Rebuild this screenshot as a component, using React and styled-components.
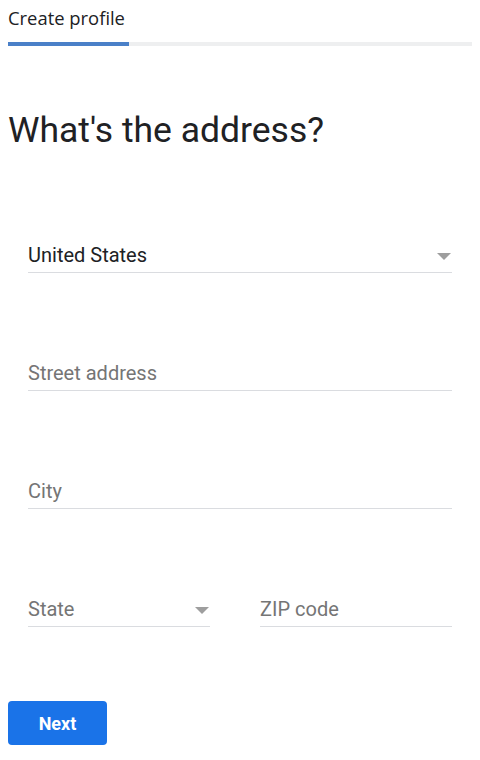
import React from "react";
import styled, { createGlobalStyle } from "styled-components";

const GlobalStyle = createGlobalStyle`
  body {
    margin: 0;
    background: #ffffff;
    font-family: Roboto, "Liberation Sans", Arial, sans-serif;
    color: #202124;
  }
`;

const Page = styled.div`
  width: 480px;
  min-height: 760px;
  display: flex;
  flex-direction: column;
`;

const Header = styled.div`
  padding: 7px 8px 0;
  font-family: "Open Sans", Roboto, sans-serif;
  font-size: 18.4px;
  line-height: 22px;
  color: #202124;
`;

const Track = styled.div`
  margin: 13px 8px 0;
  height: 4px;
  background: #eeeff0;
  display: flex;
`;

const Fill = styled.div`
  height: 100%;
  background: #4a80c8;
`;

const Title = styled.h1`
  margin: 64px 0 0 8px;
  font-size: 35.5px;
  line-height: 40px;
  font-weight: 400;
  color: #202124;
`;

const Form = styled.div`
  display: flex;
  flex-direction: column;
  gap: 88px;
  margin-top: 93px;
  padding: 0 28px;
`;

const Row = styled.div`
  display: flex;
  gap: 50px;
`;

const Field = styled.div`
  flex: ${(p) => (p.$width ? `0 0 ${p.$width}px` : "1")};
  display: flex;
  align-items: center;
  justify-content: space-between;
  padding-bottom: 5px;
  border-bottom: 1px solid #dadce0;
  font-size: 20px;
  line-height: 24px;
  color: ${(p) => (p.$filled ? "#202124" : "#757575")};
`;

const Caret = styled.span`
  width: 0;
  height: 0;
  margin-right: 1px;
  margin-top: 2px;
  border-left: 7px solid transparent;
  border-right: 7px solid transparent;
  border-top: 7px solid #9e9e9e;
`;

const Button = styled.button`
  margin: 74px 0 0 8px;
  width: 99px;
  height: 44px;
  border: none;
  border-radius: 4px;
  background: #1a73e8;
  color: #ffffff;
  font-family: Roboto, "Liberation Sans", Arial, sans-serif;
  font-size: 18px;
  font-weight: 700;
  cursor: pointer;
`;

const App = () => {
  const progress = 121;

  return (
    <Page>
      <GlobalStyle />
      <Header>Create profile</Header>
      <Track>
        <Fill style={{ width: progress }} />
      </Track>
      <Title>What's the address?</Title>
      <Form>
        <Field $filled>
          United States
          <Caret />
        </Field>
        <Field>Street address</Field>
        <Field>City</Field>
        <Row>
          <Field $width={182}>
            State
            <Caret />
          </Field>
          <Field>ZIP code</Field>
        </Row>
      </Form>
      <Button>Next</Button>
    </Page>
  );
};

export default App;
